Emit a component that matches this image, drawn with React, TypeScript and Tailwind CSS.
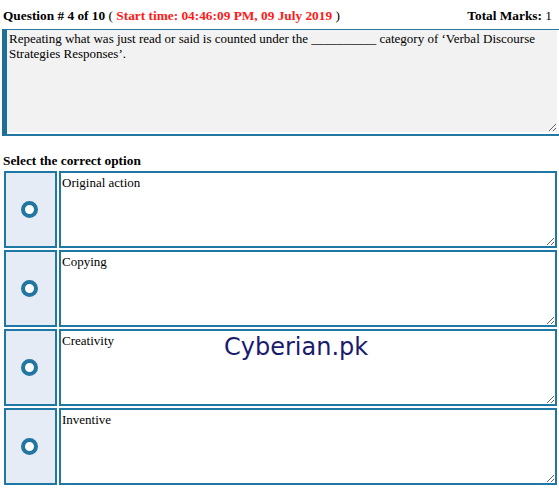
const options = ["Original action", "Copying", "Creativity", "Inventive"];

function RadioCell() {
  return (
    <div className="flex w-[53px] shrink-0 items-center justify-center border-2 border-[#1f78a4] bg-[#e6ecf5] pr-[3px]">
      <span className="block h-[17px] w-[17px] rounded-full border-[4px] border-[#22769f] bg-white" />
    </div>
  );
}

export default function App() {
  return (
    <div className="relative h-[492px] w-[559px] overflow-hidden bg-white font-['Liberation_Serif',serif] text-[13.33px] text-black">
      <div className="flex items-center justify-between pl-[3px] pr-[7px] pt-[8px] pb-[5px] leading-[16px]">
        <div>
          <b>Question # 4 of 10</b> ({" "}
          <b className="text-[#ff1a1a]">Start time: 04:46:09 PM, 09 July 2019</b> )
        </div>
        <div className="text-black">
          <b>Total Marks:</b> <span className="text-black">1</span>
        </div>
      </div>

      <div className="ml-[2px] border-l-[5px] border-t border-b-2 border-[#1d6f96] border-t-[#2479a3] border-b-[#2479a3]">
        <textarea
          readOnly
          className="mb-[2px] block h-[102px] w-[550px] bg-[#f2f2f2] px-[2px] pt-[1px] text-[13px] leading-[15px] outline-none"
          defaultValue="Repeating what was just read or said is counted under the __________ category of ‘Verbal Discourse Strategies Responses’."
        />
      </div>

      <div className="pl-[3px] pt-[16px] pb-[2px] font-bold leading-[17px]">Select the correct option</div>

      <div className="flex flex-col gap-[2px] pl-[4px]">
        {options.map((opt) => (
          <div key={opt} className="flex h-[77px] gap-[2px]">
            <RadioCell />
            <textarea
              readOnly
              className="block h-full w-[498px] border-2 border-[#1f78a4] bg-white px-[1px] pt-[2px] text-[13px] leading-[15px] outline-none"
              defaultValue={opt}
            />
          </div>
        ))}
      </div>

      <div className="pointer-events-none absolute left-[224px] top-[329px] font-['DejaVu_Sans',sans-serif] text-[24px] text-[#1b1b6c]">
        Cyberian.pk
      </div>
    </div>
  );
}
